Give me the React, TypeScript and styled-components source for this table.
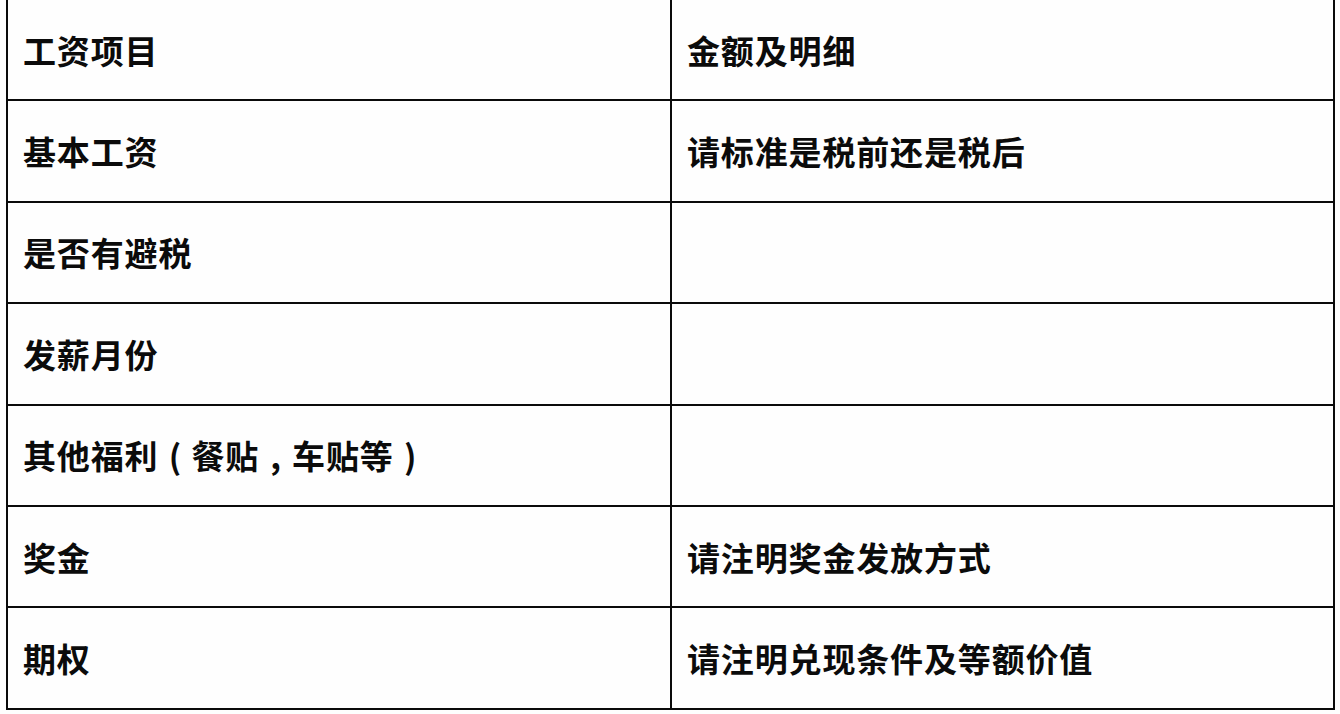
import React from 'react';
import styled, { createGlobalStyle } from 'styled-components';

const GlobalStyle = createGlobalStyle`
  html, body {
    margin: 0;
    padding: 0;
    background: #ffffff;
  }
  body {
    font-family: "Noto Sans CJK SC", "Noto Sans", sans-serif;
  }
`;

const Page = styled.div`
  width: 1340px;
  height: 714px;
  overflow: hidden;
  background: #fefefe;
  padding-left: 6px;
  box-sizing: border-box;
`;

const Table = styled.div`
  margin-top: -2px;
  display: grid;
  grid-template-columns: 662px 661px;
  grid-auto-rows: 99.4px;
  gap: 2px;
  padding: 2px;
  width: 1329px;
  box-sizing: border-box;
  background: #0a0a0a;
`;

const Cell = styled.div`
  background: #fefefe;
  display: flex;
  align-items: center;
  padding-left: 15px;
  font-size: 33px;
  font-weight: 700;
  color: #0b0b0b;
  letter-spacing: 0.85px;
  white-space: nowrap;
`;

/* centred full-width punctuation, as in the source's font */
const Punct = styled.span`
  display: inline-block;
  width: 33px;
  text-align: center;
  letter-spacing: 0;
`;

const rows: [React.ReactNode, React.ReactNode][] = [
  ['工资项目', '金额及明细'],
  ['基本工资', '请标准是税前还是税后'],
  ['是否有避税', ''],
  ['发薪月份', ''],
  [
    <>
      其他福利<Punct>(</Punct>餐贴<Punct>,</Punct>车贴等<Punct>)</Punct>
    </>,
    '',
  ],
  ['奖金', '请注明奖金发放方式'],
  ['期权', '请注明兑现条件及等额价值'],
];

const App = () => {
  return (
    <Page>
      <GlobalStyle />
      <Table>
        {rows.map(([left, right], i) => (
          <React.Fragment key={i}>
            <Cell>{left}</Cell>
            <Cell>{right}</Cell>
          </React.Fragment>
        ))}
      </Table>
    </Page>
  );
};

export default App;
